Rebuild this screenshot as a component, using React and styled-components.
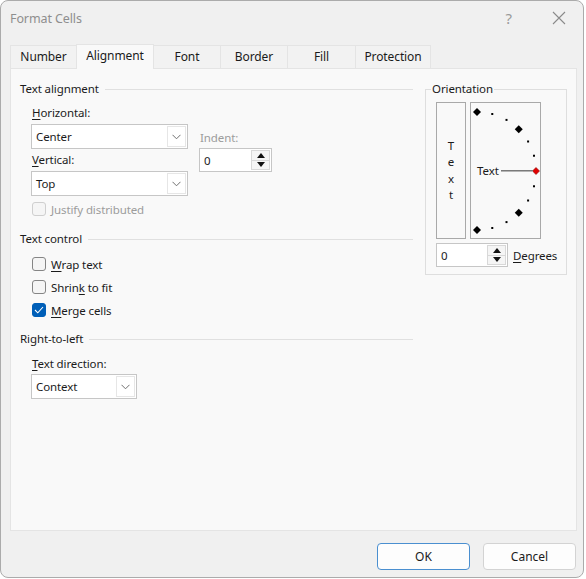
import React from 'react';
import styled, { createGlobalStyle } from 'styled-components';

const GlobalStyle = createGlobalStyle`
  html, body {
    margin: 0;
    padding: 0;
    background: #ffffff;
  }
  body {
    font-family: "Noto Sans", "Open Sans", sans-serif;
    font-size: 11.5px;
    letter-spacing: -0.1px;
    color: #1b1b1b;
  }
`;

const Window = styled.div`
  width: 584px;
  height: 578px;
  box-sizing: border-box;
  border: 1px solid #ababab;
  border-radius: 8px;
  background: #f0f0f0;
  display: flex;
  flex-direction: column;
  padding: 0 6px 0 9px;
  overflow: hidden;
`;

const TitleBar = styled.div`
  height: 34px;
  display: flex;
  align-items: center;
`;

const Title = styled.div`
  font-size: 12.5px;
  color: #8e8e8e;
`;

const TitleActions = styled.div`
  margin-left: auto;
  display: flex;
  align-items: center;
  gap: 40px;
  padding-right: 11px;
  color: #9a9a9a;
`;

const Help = styled.span`
  font-size: 15px;
  line-height: 16px;
`;

const TabStrip = styled.div`
  display: flex;
  align-items: flex-end;
  height: 24px;
  margin-top: 9px;
  position: relative;
  z-index: 1;
`;

const Tab = styled.div`
  width: ${p => p.$w}px;
  height: ${p => (p.$active ? 25 : 23)}px;
  margin-bottom: ${p => (p.$active ? -1 : 0)}px;
  margin-right: -1px;
  box-sizing: border-box;
  border: 1px solid #e4e4e4;
  border-bottom: none;
  background: ${p => (p.$active ? '#f9f9f9' : '#f2f2f2')};
  display: flex;
  align-items: center;
  justify-content: center;
  font-size: 12px;
  padding-bottom: ${p => (p.$active ? 3 : 1)}px;
`;

const Panel = styled.div`
  height: 463px;
  box-sizing: border-box;
  border: 1px solid #e4e4e4;
  background: #f9f9f9;
  display: flex;
  align-items: flex-start;
  gap: 12px;
  padding: 12px 0 0 9px;
`;

const LeftColumn = styled.div`
  width: 393px;
  display: flex;
  flex-direction: column;
`;

const GroupHeader = styled.div`
  display: flex;
  align-items: center;
  height: 16px;
  line-height: 16px;
  margin-top: ${p => p.$mt || 0}px;

  &::after {
    content: '';
    flex: 1;
    height: 1px;
    background: #e0e0e0;
    margin-left: 6px;
  }
`;

const Section = styled.div`
  padding-left: 11px;
  display: flex;
  flex-direction: column;
  align-items: flex-start;
  margin-top: ${p => p.$mt || 0}px;
`;

const AlignGrid = styled.div`
  display: flex;
  align-items: flex-start;
  gap: 11px;
`;

const Stack = styled.div`
  display: flex;
  flex-direction: column;
  align-items: flex-start;
`;

const FieldLabel = styled.div`
  height: 16px;
  line-height: 16px;
  padding-left: 1px;
  margin-top: ${p => p.$mt || 0}px;
  color: ${p => (p.$disabled ? '#9c9c9c' : 'inherit')};

  u {
    text-underline-offset: 2px;
  }
`;

const Combo = styled.div`
  width: ${p => p.$w}px;
  height: 25px;
  box-sizing: border-box;
  border: 1px solid #c6c6c6;
  background: #ffffff;
  display: flex;
  margin-top: ${p => p.$mt || 0}px;
`;

const FieldValue = styled.div`
  flex: 1;
  display: flex;
  align-items: center;
  padding-left: 4px;
`;

const ComboButton = styled.div`
  width: 19px;
  margin: 1px;
  box-sizing: border-box;
  border: 1px solid #e6e6e6;
  display: flex;
  align-items: center;
  justify-content: center;
`;

const Spin = styled.div`
  width: ${p => p.$w}px;
  height: 24px;
  box-sizing: border-box;
  border: 1px solid #c6c6c6;
  background: #ffffff;
  display: flex;
  margin-top: ${p => p.$mt || 0}px;
`;

const SpinButtons = styled.div`
  width: 19px;
  margin: 1px;
  box-sizing: border-box;
  border: 1px solid #d8d8d8;
  background: #f5f5f5;
  display: flex;
  flex-direction: column;
`;

const SpinHalf = styled.div`
  flex: 1;
  display: flex;
  align-items: center;
  justify-content: center;

  & + & {
    border-top: 1px solid #d8d8d8;
  }
`;

const CheckRow = styled.div`
  display: flex;
  align-items: center;
  gap: 5px;
  height: 16px;
  padding-left: 1px;
  margin-top: ${p => p.$mt || 0}px;
  color: ${p => (p.$disabled ? '#9c9c9c' : 'inherit')};

  u {
    text-underline-offset: 2px;
  }
`;

const Box = styled.span`
  width: 14px;
  height: 14px;
  box-sizing: border-box;
  border-radius: 3px;
  border: 1px solid ${p => (p.$checked ? '#005fb8' : p.$disabled ? '#cfcfcf' : '#858585')};
  background: ${p => (p.$checked ? '#005fb8' : '#f5f5f5')};
  display: flex;
  align-items: center;
  justify-content: center;
`;

const RightColumn = styled.fieldset`
  width: 142px;
  margin: 0;
  box-sizing: border-box;
  border: 1px solid #dedede;
  padding: 5px 8px 7px 10px;
  min-width: 0;
`;

const Legend = styled.legend`
  padding: 0 1px;
  margin-left: -5px;
  line-height: 16px;
`;

const OrientRow = styled.div`
  display: flex;
  gap: 4px;
`;

const VerticalText = styled.div`
  width: 30px;
  height: 137px;
  box-sizing: border-box;
  border: 1px solid #a9a9a9;
  display: flex;
  flex-direction: column;
  align-items: center;
  justify-content: center;
  line-height: 16.5px;
`;

const Dial = styled.div`
  width: 71px;
  height: 137px;
  box-sizing: border-box;
  border: 1px solid #a9a9a9;
  display: flex;
`;

const DegreesRow = styled.div`
  display: flex;
  align-items: center;
  gap: 5px;
  margin-top: 4px;

  u {
    text-underline-offset: 2px;
  }
`;

const Footer = styled.div`
  display: flex;
  justify-content: flex-end;
  gap: 13px;
  padding: 12px 1px 0 0;
`;

const Button = styled.button`
  width: 93px;
  height: 27px;
  box-sizing: border-box;
  border-radius: 4px;
  border: 1px solid ${p => (p.$primary ? '#4a8fd0' : '#d3d3d3')};
  background: #fdfdfd;
  font-family: inherit;
  font-size: 12px;
  color: #1b1b1b;
  padding: 0;
`;

const Chevron = () => (
  <svg width="9" height="6" viewBox="0 0 9 6">
    <polyline points="0.5,0.8 4.5,4.8 8.5,0.8" fill="none" stroke="#707070" strokeWidth="1" />
  </svg>
);

const Arrow = ({ up }) => (
  <svg width="8" height="5" viewBox="0 0 8 5">
    <polygon points={up ? '0,5 4,0 8,5' : '0,0 4,5 8,0'} fill="#111" />
  </svg>
);

const Tick = () => (
  <svg width="10" height="8" viewBox="0 0 10 8">
    <polyline points="1,4 3.8,6.8 9,1" fill="none" stroke="#ffffff" strokeWidth="1.1" />
  </svg>
);

const Close = () => (
  <svg width="14" height="14" viewBox="0 0 14 14">
    <path d="M1 1 L13 13 M13 1 L1 13" stroke="#8a8a8a" strokeWidth="1.1" />
  </svg>
);

const ComboBox = ({ w, mt, value }) => (
  <Combo $w={w} $mt={mt}>
    <FieldValue>{value}</FieldValue>
    <ComboButton>
      <Chevron />
    </ComboButton>
  </Combo>
);

const SpinBox = ({ w, mt, value }) => (
  <Spin $w={w} $mt={mt}>
    <FieldValue>{value}</FieldValue>
    <SpinButtons>
      <SpinHalf><Arrow up /></SpinHalf>
      <SpinHalf><Arrow /></SpinHalf>
    </SpinButtons>
  </Spin>
);

const CheckItem = ({ checked, disabled, mt, children }) => (
  <CheckRow $mt={mt} $disabled={disabled}>
    <Box $checked={checked} $disabled={disabled}>{checked && <Tick />}</Box>
    <span>{children}</span>
  </CheckRow>
);

const tabs = [
  { label: 'Number', w: 67 },
  { label: 'Alignment', w: 78, active: true },
  { label: 'Font', w: 68 },
  { label: 'Border', w: 68 },
  { label: 'Fill', w: 69 },
  { label: 'Protection', w: 76 },
];

const OrientationDial = () => {
  const cx = 6;
  const cy = 68;
  const r = 59;
  const marks = [];
  for (let a = 90; a >= -90; a -= 15) {
    const rad = (a * Math.PI) / 180;
    const x = cx + r * Math.cos(rad);
    const y = cy - r * Math.sin(rad);
    if (a === 0) {
      marks.push(
        <polygon key={a} points={`${x},${y - 3.5} ${x + 3.5},${y} ${x},${y + 3.5} ${x - 3.5},${y}`}
          fill="#e00000" stroke="#900000" strokeWidth="0.6" />
      );
    } else if (a % 45 === 0) {
      marks.push(
        <polygon key={a} points={`${x},${y - 4} ${x + 4},${y} ${x},${y + 4} ${x - 4},${y}`} fill="#000" />
      );
    } else {
      marks.push(<rect key={a} x={x - 1} y={y - 1} width="2" height="2" fill="#000" />);
    }
  }
  return (
    <svg width="69" height="135" viewBox="0 0 69 135">
      {marks}
      <line x1="30" y1={cy - 0.5} x2="62" y2={cy - 0.5} stroke="#7a7a7a" strokeWidth="1" />
      <line x1="30" y1={cy + 0.5} x2="62" y2={cy + 0.5} stroke="#b5b5b5" strokeWidth="1" />
      <text x={cx} y={cy + 4} fontSize="11.5" fontFamily="Noto Sans, sans-serif" fill="#1b1b1b">Text</text>
    </svg>
  );
};

export default function App() {
  return (
    <>
      <GlobalStyle />
      <Window>
        <TitleBar>
          <Title>Format Cells</Title>
          <TitleActions>
            <Help>?</Help>
            <Close />
          </TitleActions>
        </TitleBar>

        <TabStrip>
          {tabs.map(t => (
            <Tab key={t.label} $w={t.w} $active={t.active}>{t.label}</Tab>
          ))}
        </TabStrip>

        <Panel>
          <LeftColumn>
            <GroupHeader>Text alignment</GroupHeader>
            <Section $mt={8}>
              <AlignGrid>
                <Stack>
                  <FieldLabel><u>H</u>orizontal:</FieldLabel>
                  <ComboBox w={157} mt={3} value="Center" />
                  <FieldLabel $mt={3}><u>V</u>ertical:</FieldLabel>
                  <ComboBox w={157} mt={3} value="Top" />
                  <CheckItem disabled mt={5}>Justify distributed</CheckItem>
                </Stack>
                <Stack>
                  <FieldLabel $mt={25} $disabled>Indent:</FieldLabel>
                  <SpinBox w={73} mt={2} value="0" />
                </Stack>
              </AlignGrid>
            </Section>

            <GroupHeader $mt={14}>Text control</GroupHeader>
            <Section $mt={9}>
              <CheckItem><u>W</u>rap text</CheckItem>
              <CheckItem mt={7}>Shrin<u>k</u> to fit</CheckItem>
              <CheckItem checked mt={7}><u>M</u>erge cells</CheckItem>
            </Section>

            <GroupHeader $mt={13}>Right-to-left</GroupHeader>
            <Section $mt={9}>
              <FieldLabel><u>T</u>ext direction:</FieldLabel>
              <ComboBox w={106} mt={2} value="Context" />
            </Section>
          </LeftColumn>

          <RightColumn>
            <Legend>Orientation</Legend>
            <OrientRow>
              <VerticalText>
                <span>T</span>
                <span>e</span>
                <span>x</span>
                <span>t</span>
              </VerticalText>
              <Dial>
                <OrientationDial />
              </Dial>
            </OrientRow>
            <DegreesRow>
              <SpinBox w={72} value="0" />
              <span><u>D</u>egrees</span>
            </DegreesRow>
          </RightColumn>
        </Panel>

        <Footer>
          <Button $primary>OK</Button>
          <Button>Cancel</Button>
        </Footer>
      </Window>
    </>
  );
}
